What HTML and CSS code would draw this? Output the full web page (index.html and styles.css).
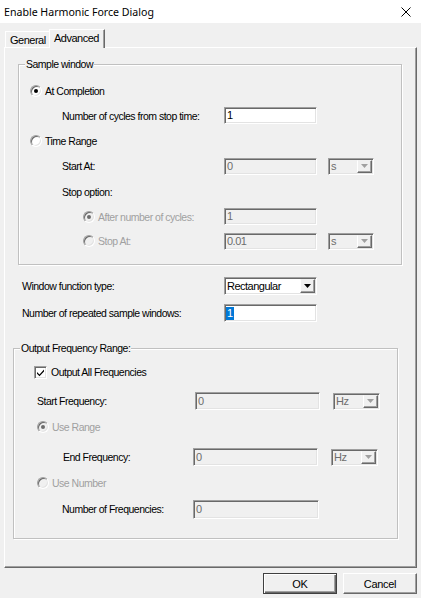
FILE: index.html
```html
<!DOCTYPE html>
<html>
<head>
<meta charset="utf-8">
<title>Enable Harmonic Force Dialog</title>
<link rel="stylesheet" href="styles.css">
</head>
<body>
<div class="titlebar">
  <span class="title">Enable Harmonic Force Dialog</span>
  <svg class="close" width="10" height="10" viewBox="0 0 10 10"><path d="M0.5 0.5 L9.5 9.5 M9.5 0.5 L0.5 9.5" stroke="#000" stroke-width="1" fill="none"/></svg>
</div>
<div class="tabs">
  <div class="tab general">General</div>
  <div class="tab active">Advanced</div>
</div>
<div class="panel">
  <div class="group g1">
    <span class="legend">Sample window</span>
    <div class="row h25 pl11"><span class="radio checked"></span><span class="rlabel">At Completion</span></div>
    <div class="row h25 pl43"><span class="lbl w162">Number of cycles from stop time:</span><div class="field w93 h17"><span class="val">1</span></div></div>
    <div class="row h25 pl11"><span class="radio"></span><span class="rlabel">Time Range</span></div>
    <div class="row h26 pl43"><span class="lbl w162">Start At:</span><div class="field dis w93 h17"><span class="val">0</span></div><div class="combo dis w46 h17 ml11"><span class="val">s</span><span class="cbtn"><svg width="7" height="4" viewBox="0 0 7 4"><path d="M0 0H7L3.5 4Z" fill="#a0a0a0"/></svg></span></div></div>
    <div class="row h25 pl43"><span class="lbl">Stop option:</span></div>
    <div class="row h25 pl64"><span class="cell w141"><span class="radio dis checked"></span><span class="rlabel grey">After number of cycles:</span></span><div class="field dis w93 h17"><span class="val">1</span></div></div>
    <div class="row h24 pl64"><span class="cell w141"><span class="radio dis"></span><span class="rlabel grey">Stop At:</span></span><div class="field dis w93 h17"><span class="val">0.01</span></div><div class="combo dis w46 h17 ml11"><span class="val">s</span><span class="cbtn"><svg width="7" height="4" viewBox="0 0 7 4"><path d="M0 0H7L3.5 4Z" fill="#a0a0a0"/></svg></span></div></div>
  </div>

  <div class="row h20 pl17 mt11"><span class="lbl w202">Window function type:</span><div class="combo w93 h18"><span class="val">Rectangular</span><span class="cbtn"><svg width="7" height="4" viewBox="0 0 7 4"><path d="M0 0H7L3.5 4Z" fill="#000"/></svg></span></div></div>
  <div class="row h20 pl17 mt7"><span class="lbl w202">Number of repeated sample windows:</span><div class="field w93 h18"><span class="val sel">1</span></div></div>

  <div class="group g2">
    <span class="legend">Output Frequency Range:</span>
    <div class="row h20 pl20"><span class="check"><svg width="9" height="9" viewBox="0 0 9 9"><path d="M1 4 L3.5 6.5 L8 1.5 L8 3.5 L3.5 8.3 L1 5.8Z" fill="#000"/></svg></span><span class="clabel">Output All Frequencies</span></div>
    <div class="row h20 pl23 mt9"><span class="lbl w158">Start Frequency:</span><div class="field dis w125 h18"><span class="val">0</span></div><div class="combo dis w47 h17 ml13"><span class="val">Hz</span><span class="cbtn"><svg width="7" height="4" viewBox="0 0 7 4"><path d="M0 0H7L3.5 4Z" fill="#a0a0a0"/></svg></span></div></div>
    <div class="row h20 pl23 mt6"><span class="radio dis checked"></span><span class="rlabel grey">Use Range</span></div>
    <div class="row h20 pl49 mt10"><span class="lbl w130">End Frequency:</span><div class="field dis w125 h18"><span class="val">0</span></div><div class="combo dis w47 h17 ml13"><span class="val">Hz</span><span class="cbtn"><svg width="7" height="4" viewBox="0 0 7 4"><path d="M0 0H7L3.5 4Z" fill="#a0a0a0"/></svg></span></div></div>
    <div class="row h20 pl23 mt6"><span class="radio dis"></span><span class="rlabel grey">Use Number</span></div>
    <div class="row h20 pl48 mt6"><span class="lbl w131">Number of Frequencies:</span><div class="field dis w126 h19"><span class="val">0</span></div></div>
  </div>
</div>
<div class="buttons">
  <button class="btn default">OK</button>
  <button class="btn">Cancel</button>
</div>
</body>
</html>
```

FILE: styles.css
```css
* { box-sizing: border-box; }
html, body { margin: 0; padding: 0; }
body {
  background: #f0f0f0;
  width: 421px;
  height: 598px;
  overflow: hidden;
  font-family: "Liberation Sans", Arial, sans-serif;
  font-size: 10.5px;
  letter-spacing: -0.5px;
  color: #000;
}

/* title bar */
.titlebar {
  height: 23px;
  background: #fff;
  display: flex;
  align-items: center;
  justify-content: space-between;
  padding: 0 10px 0 4px;
}
.title {
  font-family: "Noto Sans", "Open Sans", sans-serif;
  font-size: 10.6px;
  letter-spacing: 0;
  color: #000;
}
.close { display: block; }

/* tabs */
.tabs {
  display: flex;
  align-items: flex-end;
  height: 24px;
  padding-left: 5px;
}
.tab {
  display: flex;
  align-items: center;
  padding-left: 4px;
  border-top: 1px solid #fff;
  border-left: 1px solid #fff;
  font-size: 11px;
}
.tab.general {
  width: 44px;
  height: 16px;
  padding-top: 1px;
}
.tab.active {
  width: 56px;
  height: 19px;
  margin-bottom: -1px;
  position: relative;
  z-index: 1;
  background: #f0f0f0;
  border-right: 1px solid #696969;
  box-shadow: inset -1px 0 0 #a0a0a0;
  padding-bottom: 3px;
}

/* panel */
.panel {
  margin-left: 4px;
  width: 413px;
  height: 521px;
  border-top: 1px solid #fff;
  border-left: 1px solid #fff;
  border-right: 1px solid #696969;
  border-bottom: 1px solid #696969;
  box-shadow: inset -1px -1px 0 #a0a0a0;
  display: flex;
  flex-direction: column;
  align-items: flex-start;
}

/* group boxes */
.group {
  position: relative;
  border: 1px solid #c0c0c0;
  box-shadow: 1px 1px 0 #fff, inset 1px 1px 0 #fff;
  display: flex;
  flex-direction: column;
}
.g1 {
  margin-top: 16px;
  margin-left: 13px;
  width: 384px;
  height: 201px;
  padding-top: 13px;
}
.g2 {
  margin-top: 25px;
  margin-left: 8px;
  width: 385px;
  height: 191px;
  padding-top: 13px;
}
.legend {
  position: absolute;
  top: -7px;
  left: 6px;
  padding: 0 1px;
  line-height: 13px;
  background: #f0f0f0;
}

/* rows */
.row { display: flex; align-items: center; }
.cell { display: flex; align-items: center; }
.h20 { height: 20px; }
.h24 { height: 24px; }
.h25 { height: 25px; }
.h26 { height: 26px; }
.pl11 { padding-left: 11px; }
.pl17 { padding-left: 17px; }
.pl20 { padding-left: 20px; }
.pl23 { padding-left: 23px; }
.pl43 { padding-left: 43px; }
.pl48 { padding-left: 48px; }
.pl49 { padding-left: 49px; }
.pl64 { padding-left: 64px; }
.mt6 { margin-top: 6px; }
.mt7 { margin-top: 7px; }
.mt9 { margin-top: 9px; }
.mt10 { margin-top: 10px; }
.mt11 { margin-top: 11px; }
.ml11 { margin-left: 11px; }
.ml13 { margin-left: 13px; }

.lbl { display: block; white-space: nowrap; flex: none; }
.w130 { width: 130px; }
.w131 { width: 131px; }
.w141 { width: 141px; }
.w158 { width: 158px; }
.w162 { width: 162px; }
.w202 { width: 202px; }
.w46 { width: 46px; }
.w47 { width: 47px; }
.w93 { width: 93px; }
.w125 { width: 125px; }
.w126 { width: 126px; }
.h17 { height: 17px; }
.h18 { height: 18px; }
.h19 { height: 19px; }

.grey { color: #a0a0a0; }

/* radio */
.radio {
  position: relative;
  flex: none;
  width: 12px;
  height: 12px;
  border-radius: 50%;
  border: 1px solid;
  border-color: #a0a0a0 #fff #fff #a0a0a0;
  background: #fff;
  box-shadow: inset 1px 1px 0 #696969, inset -1px -1px 0 #e3e3e3;
}
.radio.checked::after {
  content: "";
  position: absolute;
  left: 3px;
  top: 3px;
  width: 4px;
  height: 4px;
  border-radius: 50%;
  background: #000;
}
.radio.dis { background: #f0f0f0; }
.radio.dis.checked::after { background: #6d6d6d; }
.rlabel { margin-left: 3px; white-space: nowrap; }

/* checkbox */
.check {
  flex: none;
  width: 13px;
  height: 13px;
  border: 1px solid;
  border-color: #a0a0a0 #fff #fff #a0a0a0;
  background: #fff;
  box-shadow: inset 1px 1px 0 #696969, inset -1px -1px 0 #e3e3e3;
  display: flex;
  align-items: center;
  justify-content: center;
}
.check svg { display: block; }
.clabel { margin-left: 4px; }

/* text fields */
.field, .combo {
  flex: none;
  display: flex;
  align-items: center;
  border: 1px solid;
  border-color: #a0a0a0 #fff #fff #a0a0a0;
  box-shadow: inset 1px 1px 0 #696969, inset -1px -1px 0 #e3e3e3;
  background: #fff;
  padding-left: 2px;
  font-size: 11px;
}
.field.dis, .combo.dis { background: #f0f0f0; color: #6d6d6d; }
.val { white-space: nowrap; line-height: 13px; }
.val.sel { background: #0078d7; color: #fff; padding: 0 1px; margin-left: -1px; height: 13px; letter-spacing: 0; }

.combo { justify-content: space-between; padding-right: 1px; }
.cbtn {
  flex: none;
  width: 15px;
  height: calc(100% - 2px);
  display: flex;
  align-items: center;
  justify-content: center;
  background: #f0f0f0;
  border-top: 1px solid #f0f0f0;
  border-left: 1px solid #fff;
  border-right: 1px solid #696969;
  border-bottom: 1px solid #696969;
  box-shadow: inset -1px -1px 0 #a0a0a0;
  padding: 0 1px 1px 0;
}
.cbtn svg { display: block; }

/* buttons */
.buttons {
  display: flex;
  justify-content: flex-end;
  gap: 6px;
  padding-right: 4px;
  margin-top: 5px;
}
.btn {
  width: 74px;
  height: 21px;
  font-family: "Liberation Sans", Arial, sans-serif;
  font-size: 11px;
  letter-spacing: -0.3px;
  color: #000;
  background: #f0f0f0;
  border: 1px solid;
  border-color: #fff #696969 #696969 #fff;
  box-shadow: inset -1px -1px 0 #a0a0a0;
  padding: 0;
  margin: 0;
}
.btn.default {
  border-color: #404040;
  box-shadow: inset 1px 1px 0 #fff, inset -1px -1px 0 #696969, inset -2px -2px 0 #a0a0a0;
}
```
